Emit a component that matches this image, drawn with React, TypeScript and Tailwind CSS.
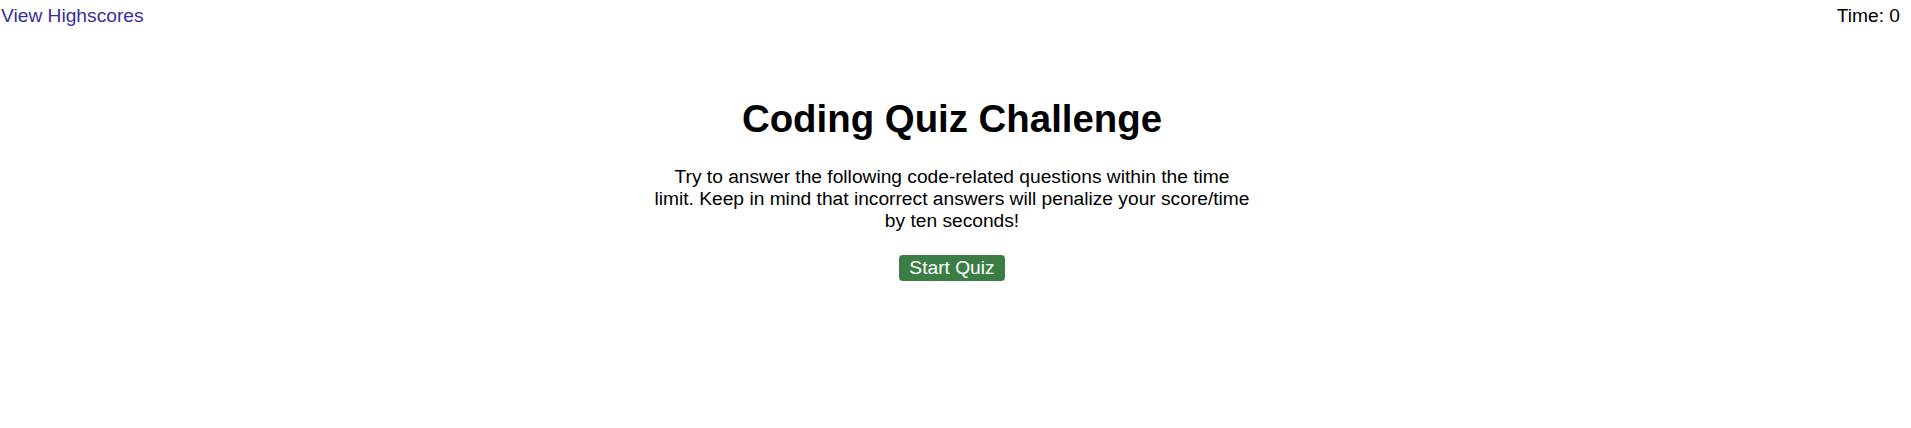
export default function App() {
  return (
    <div className="min-h-[428px] bg-white text-black font-['Liberation_Sans',Arial,sans-serif] text-[19.2px] leading-[22px]">
      <header className="flex justify-between items-start pt-[5px] pl-[1px] pr-[11px]">
        <a href="#" className="text-[#3b2c9f]">
          View Highscores
        </a>
        <div>Time: 0</div>
      </header>

      <div className="pr-[7px]">
        <main className="mx-auto w-[596px] pt-[70px] flex flex-col items-center text-center">
          <h1 className="text-[38.4px] leading-[43px] font-bold">
            Coding Quiz Challenge
          </h1>
          <p className="mt-[26px]">
            Try to answer the following code-related questions within the time
            limit. Keep in mind that incorrect answers will penalize your
            score/time by ten seconds!
          </p>
          <button className="mt-[23px] h-[26px] px-[10px] rounded-[4px] bg-[#3b7d45] text-white leading-[22px]">
            Start Quiz
          </button>
        </main>
      </div>
    </div>
  );
}
